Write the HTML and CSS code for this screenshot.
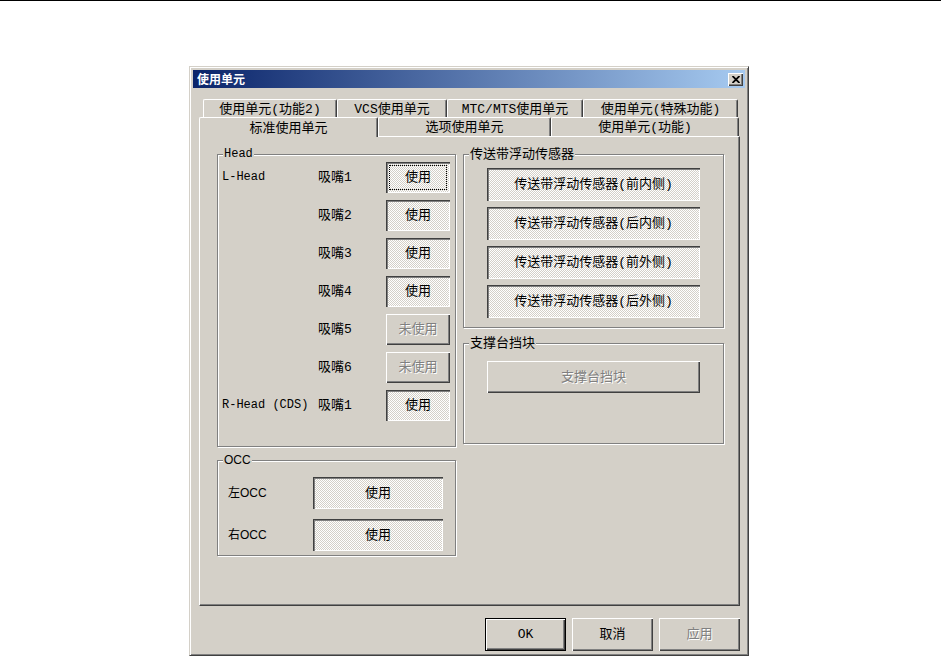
FILE: index.html
```html
<!DOCTYPE html>
<html lang="zh-CN">
<head>
<meta charset="utf-8">
<title>使用单元</title>
<link rel="stylesheet" href="styles.css">
</head>
<body>
<div class="topline"></div>
<div class="dialog">
  <div class="titlebar">
    <span class="title">使用单元</span>
    <span class="close"><svg width="8" height="7" viewBox="0 0 8 7"><path d="M0.5 0 L7.5 7 M7.5 0 L0.5 7" stroke="#000" stroke-width="1.8"/></svg></span>
  </div>
  <div class="body">
    <div class="tabrow back">
      <div class="tab w1">使用单元(功能2)</div>
      <div class="tab w2">VCS使用单元</div>
      <div class="tab w3">MTC/MTS使用单元</div>
      <div class="tab w4">使用单元(特殊功能)</div>
    </div>
    <div class="tabrow front">
      <div class="tab sel w5">标准使用单元</div>
      <div class="tab w6">选项使用单元</div>
      <div class="tab w7">使用单元(功能)</div>
    </div>
    <div class="panel">
      <div class="col">
        <div class="group head">
          <span class="gtitle mono">Head</span>
          <div class="headgrid">
            <span class="mono">L-Head</span><span>吸嘴1</span><button class="btn on focus">使用</button>
            <span></span><span>吸嘴2</span><button class="btn on">使用</button>
            <span></span><span>吸嘴3</span><button class="btn on">使用</button>
            <span></span><span>吸嘴4</span><button class="btn on">使用</button>
            <span></span><span>吸嘴5</span><button class="btn dis">未使用</button>
            <span></span><span>吸嘴6</span><button class="btn dis">未使用</button>
            <span class="mono">R-Head (CDS)</span><span>吸嘴1</span><button class="btn on">使用</button>
          </div>
        </div>
        <div class="group occ">
          <span class="gtitle sans">OCC</span>
          <div class="occgrid">
            <span class="sans">左OCC</span><button class="btn on">使用</button>
            <span class="sans">右OCC</span><button class="btn on">使用</button>
          </div>
        </div>
      </div>
      <div class="col">
        <div class="group conv">
          <span class="gtitle">传送带浮动传感器</span>
          <div class="stack">
            <button class="btn on wide">传送带浮动传感器(前内侧)</button>
            <button class="btn on wide">传送带浮动传感器(后内侧)</button>
            <button class="btn on wide">传送带浮动传感器(前外侧)</button>
            <button class="btn on wide">传送带浮动传感器(后外侧)</button>
          </div>
        </div>
        <div class="group stop">
          <span class="gtitle">支撑台挡块</span>
          <div class="stack">
            <button class="btn dis wide short">支撑台挡块</button>
          </div>
        </div>
      </div>
    </div>
    <div class="actions">
      <button class="btn def">OK</button>
      <button class="btn">取消</button>
      <button class="btn dis">应用</button>
    </div>
  </div>
</div>
</body>
</html>
```

FILE: styles.css
```css
* { box-sizing: border-box; }

body {
  margin: 0;
  background: #fff;
  color: #000;
  font: 13px/15px "Liberation Mono", "Noto Sans CJK SC", monospace;
}

.topline {
  height: 1px;
  background: #000;
}

.dialog {
  margin: 65px 0 0 189px;
  width: 560px;
  height: 590px;
  background: #d4d0c8;
  border: 1px solid;
  border-color: #d4d0c8 #404040 #404040 #d4d0c8;
  box-shadow: inset 1px 1px #fff, inset -1px -1px #808080;
  padding: 3px 3px 0 3px;
}

.titlebar {
  height: 18px;
  background: linear-gradient(to right, #0a246a, #a6caf0);
  display: flex;
  align-items: center;
  justify-content: space-between;
  padding: 0 2px 0 4px;
}

.title {
  color: #fff;
  font: bold 12px/14px "Noto Sans CJK SC", sans-serif;
}

.close {
  width: 15px;
  height: 13px;
  background: #d4d0c8;
  box-shadow: inset 1px 1px #fff, inset -1px -1px #404040, inset -2px -2px #808080;
  display: flex;
  align-items: center;
  justify-content: center;
}

.body {
  padding: 11px 0 0 6px;
}

.tabrow {
  display: flex;
}

.tabrow.back {
  height: 18px;
  padding-left: 4px;
}

.tabrow.front {
  height: 19px;
}

.tab {
  border-top: 1px solid #fff;
  border-left: 1px solid #fff;
  border-right: 1px solid #404040;
  border-radius: 2px 2px 0 0;
  box-shadow: inset -1px 0 #808080;
  display: flex;
  align-items: center;
  justify-content: center;
  white-space: nowrap;
  background: #d4d0c8;
  padding-top: 1px;
}

.w1 { width: 134px; }
.w2 { width: 110px; }
.w3 { width: 136px; }
.w4 { width: 155px; }
.w5 { width: 179px; }
.w6 { width: 173px; }
.w7 { width: 188px; }

.tab.sel {
  position: relative;
  z-index: 1;
  height: 20px;
  margin-bottom: -1px;
}

.panel {
  width: 541px;
  height: 470px;
  border-top: 1px solid #fff;
  border-left: 1px solid #fff;
  border-right: 1px solid #404040;
  border-bottom: 1px solid #404040;
  box-shadow: inset -1px -1px #808080;
  padding: 17px 0 0 17px;
  display: grid;
  grid-template-columns: 239px 261px;
  column-gap: 7px;
  align-items: start;
}

.col {
  display: flex;
  flex-direction: column;
}

.group {
  position: relative;
  border: 1px solid #808080;
  box-shadow: inset 1px 1px #fff, 1px 1px #fff;
}

.gtitle {
  position: absolute;
  top: -8px;
  left: 5px;
  padding: 0 1px;
  background: #d4d0c8;
  line-height: 15px;
  white-space: nowrap;
}

.mono { font-family: "Liberation Mono", monospace; font-size: 12px; }
.sans { font-family: "Liberation Sans", "Noto Sans CJK SC", sans-serif; font-size: 12px; }

.head {
  height: 293px;
  padding: 7px 0 0 4px;
}

.headgrid {
  display: grid;
  grid-template-columns: 96px 68px 64px;
  grid-auto-rows: 31px;
  row-gap: 7px;
  align-items: center;
}

.occ {
  margin-top: 13px;
  height: 96px;
  padding: 16px 0 0 10px;
}

.occgrid {
  display: grid;
  grid-template-columns: 85px 130px;
  grid-auto-rows: 32px;
  row-gap: 10px;
  align-items: center;
}

.conv {
  height: 174px;
  padding: 13px 0 0 23px;
}

.stack {
  display: flex;
  flex-direction: column;
  gap: 6px;
}

.stop {
  margin-top: 15px;
  height: 101px;
  padding: 17px 0 0 23px;
}

.btn {
  font: inherit;
  color: #000;
  border: none;
  margin: 0;
  padding: 0;
  height: 100%;
  background: #d4d0c8;
  box-shadow: inset 1px 1px #fff, inset -1px -1px #404040, inset -2px -2px #808080;
  display: flex;
  align-items: center;
  justify-content: center;
  white-space: nowrap;
}

.btn.on {
  background: repeating-conic-gradient(#ffffff 0 25%, #d4d0c8 0 50%) 0 0 / 2px 2px;
  box-shadow: inset 1px 1px #404040, inset 2px 2px #808080, inset -1px -1px #fff;
}

.btn.focus {
  outline: 1px dotted #000;
  outline-offset: -4px;
}

.btn.dis {
  color: #808080;
  text-shadow: 1px 1px #fff;
}

.btn.wide {
  width: 213px;
  height: 33px;
}

.btn.short {
  height: 32px;
}

.actions {
  display: flex;
  justify-content: flex-end;
  gap: 6px;
  width: 541px;
  margin-top: 12px;
}

.actions .btn {
  width: 81px;
  height: 33px;
}

.btn.def {
  border: 1px solid #000;
  box-shadow: inset 1px 1px #fff, inset -1px -1px #404040, inset -2px -2px #808080;
}
```
